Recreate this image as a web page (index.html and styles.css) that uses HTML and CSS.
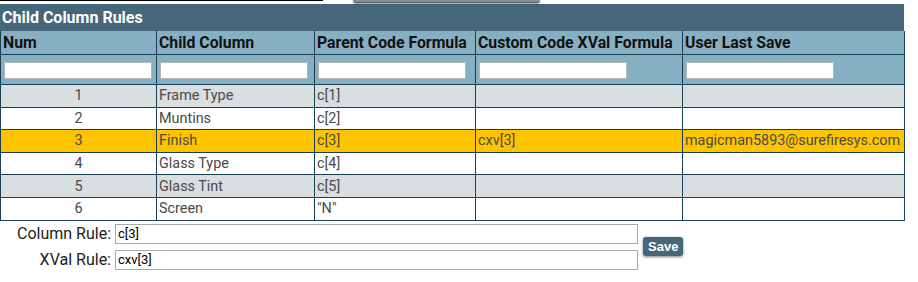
FILE: index.html
```html
<!DOCTYPE html>
<html lang="en">
<head>
    <meta charset="UTF-8">
    <title>Child Column Rules</title>
    <link rel="stylesheet" href="styles.css">
</head>
<body>

    <!-- bits of the page above, cut off by the frame -->
    <div class="top-strip">
        <div class="top-line"></div>
        <div class="top-button"></div>
    </div>

    <div class="rules-panel">
        <div class="panel-title">Child Column Rules</div>

        <table class="rules-table">
            <colgroup>
                <col class="col-num">
                <col class="col-child">
                <col class="col-parent">
                <col class="col-custom">
                <col class="col-user">
            </colgroup>
            <thead>
                <tr class="head-row">
                    <th>Num</th>
                    <th>Child Column</th>
                    <th>Parent Code Formula</th>
                    <th>Custom Code XVal Formula</th>
                    <th>User Last Save</th>
                </tr>
                <tr class="filter-row">
                    <th><input type="text" class="filter-input"></th>
                    <th><input type="text" class="filter-input"></th>
                    <th><input type="text" class="filter-input"></th>
                    <th><input type="text" class="filter-input"></th>
                    <th><input type="text" class="filter-input"></th>
                </tr>
            </thead>
            <tbody>
                <tr class="odd">
                    <td class="num">1</td><td>Frame Type</td><td>c[1]</td><td></td><td></td>
                </tr>
                <tr>
                    <td class="num">2</td><td>Muntins</td><td>c[2]</td><td></td><td></td>
                </tr>
                <tr class="selected">
                    <td class="num">3</td><td>Finish</td><td>c[3]</td><td>cxv[3]</td><td>magicman5893@surefiresys.com</td>
                </tr>
                <tr>
                    <td class="num">4</td><td>Glass Type</td><td>c[4]</td><td></td><td></td>
                </tr>
                <tr class="odd">
                    <td class="num">5</td><td>Glass Tint</td><td>c[5]</td><td></td><td></td>
                </tr>
                <tr>
                    <td class="num">6</td><td>Screen</td><td>"N"</td><td></td><td></td>
                </tr>
            </tbody>
        </table>

        <!-- Edit form for the selected rule -->
        <div class="rule-form">
            <label class="rule-label" for="column-rule">Column Rule:</label>
            <input type="text" id="column-rule" class="rule-input" value="c[3]">
            <button class="save-btn">Save</button>
            <label class="rule-label" for="xval-rule">XVal Rule:</label>
            <input type="text" id="xval-rule" class="rule-input" value="cxv[3]">
        </div>
    </div>

</body>
</html>
```

FILE: styles.css
```css
body {
    font-family: Roboto, "Liberation Sans", Arial, sans-serif;
    margin: 0;
    padding: 0;
    background-color: #fff;
}
.top-strip {
    display: flex;
    align-items: flex-start;
    height: 4px;
}
.top-line {
    width: 323px;
    height: 1px;
    background-color: #000;
}
.top-button {
    width: 187px;
    height: 2px;
    margin-left: 30px;
    background-color: #8a8f92;
    border-bottom: 1px solid #4f6069;
    border-radius: 0 0 4px 4px;
    box-shadow: 0 1px 2px rgba(0, 0, 0, 0.4);
}
.rules-panel {
    width: 904px;
}
.panel-title {
    background-color: #46677a;
    color: #fff;
    font-weight: bold;
    font-size: 16px;
    height: 27px;
    line-height: 27px;
    padding-left: 2px;
}
.rules-table {
    width: 904px;
    border-collapse: collapse;
    table-layout: fixed;
    font-size: 14.4px;
}
.col-num { width: 156px; }
.col-child { width: 158px; }
.col-parent { width: 161px; }
.col-custom { width: 207px; }
.col-user { width: 222px; }

.rules-table th,
.rules-table td {
    border: 1px solid #173f56;
    padding: 0 2px;
    text-align: left;
    white-space: nowrap;
    overflow: hidden;
}
.head-row th {
    background-color: #86afc1;
    color: #111;
    font-size: 15.8px;
    height: 23px;
    border-top: none;
}
.filter-row th {
    background-color: #86afc1;
    height: 29px;
}
.filter-input {
    box-sizing: border-box;
    width: 148px;
    height: 17px;
    margin: 1px 0 0 1px;
    padding: 0 2px;
    border: 1px solid #b5b5b5;
    display: block;
}
.rules-table td {
    color: #4a4a4a;
    height: 21.6px;
    background-color: #fff;
}
.rules-table td.num {
    text-align: center;
}
.rules-table tr.odd td {
    background-color: #d9dee1;
}
.rules-table tr.selected td {
    background-color: #ffc400;
}

.rule-form {
    display: grid;
    grid-template-columns: 111px 523px auto;
    column-gap: 4px;
    row-gap: 6px;
    align-items: center;
    margin-top: 3px;
}
.rule-label {
    text-align: right;
    font-size: 16px;
    color: #1c1c1c;
}
.rule-input {
    box-sizing: border-box;
    height: 20px;
    width: 523px;
    margin: 0;
    padding: 0 2px;
    border: 1px solid #a9a9a9;
    font-family: Roboto, "Liberation Sans", Arial, sans-serif;
    font-size: 13px;
    color: #000;
}
.save-btn {
    grid-column: 3;
    grid-row: 1 / span 2;
    align-self: center;
    justify-self: start;
    margin-left: 1px;
    padding: 0 5px;
    height: 19px;
    font-family: "Liberation Sans", Arial, sans-serif;
    font-weight: bold;
    font-size: 13px;
    color: #fff;
    background-color: #46677a;
    border: none;
    border-radius: 3px;
    box-shadow: 0 1px 3px rgba(0, 0, 0, 0.5);
    cursor: pointer;
}
```
